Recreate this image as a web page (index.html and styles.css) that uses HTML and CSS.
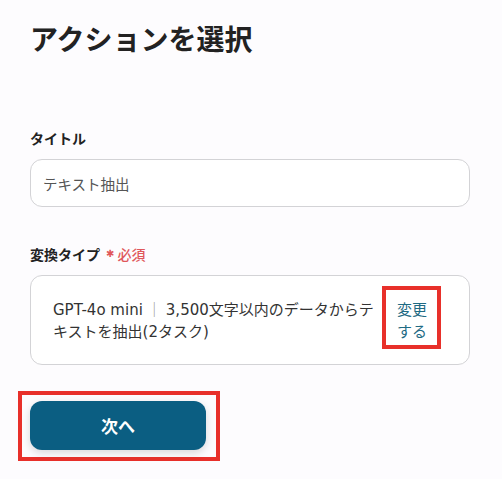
FILE: index.html
```html
<!DOCTYPE html>
<html lang="ja">
<head>
<meta charset="utf-8">
<link rel="stylesheet" href="styles.css">
</head>
<body>
<main class="page">
  <h1 class="title">アクションを選択</h1>
  <section class="field field-first">
    <label class="label">タイトル</label>
    <div class="input">テキスト抽出</div>
  </section>
  <section class="field">
    <label class="label">変換タイプ<span class="req"><span class="star">✱</span><span class="req-text">必須</span></span></label>
    <div class="select-box">
      <div class="select-text">GPT-4o mini<span class="bar">｜</span>3,500文字以内のデータからテキストを抽出(2タスク)</div>
      <a class="change">変更する</a>
    </div>
  </section>
  <div class="actions">
    <div class="next-wrap">
      <button class="next">次へ</button>
    </div>
  </div>
</main>
</body>
</html>
```
FILE: styles.css
```css
html, body {
  margin: 0;
  padding: 0;
  background: #fdfcfe;
}
body {
  font-family: "Noto Sans CJK JP", "Noto Sans", sans-serif;
  color: #222;
}
.page {
  padding: 18px 32px 0 30px;
}
.title {
  margin: 0;
  font-size: 28px;
  line-height: 40px;
  font-weight: 700;
  color: #222;
}
.field {
  display: flex;
  flex-direction: column;
  gap: 11px;
  margin-top: 37px;
}
.field-first {
  margin-top: 70px;
}
.label {
  font-size: 14px;
  line-height: 20px;
  font-weight: 700;
  color: #222;
  display: flex;
  align-items: center;
}
.req {
  color: #e0575b;
  font-weight: 500;
  display: inline-flex;
  align-items: center;
  margin-left: 6px;
}
.star {
  font-size: 10px;
  font-family: "DejaVu Sans", sans-serif;
}
.req-text {
  font-size: 14px;
  margin-left: 3px;
}
.input {
  height: 46px;
  border: 1px solid #d3d3d6;
  border-radius: 12px;
  background: #fff;
  display: flex;
  align-items: center;
  padding: 0 12px;
  font-size: 14.5px;
  color: #555;
}
.select-box {
  height: 88px;
  border: 1px solid #d3d3d6;
  border-radius: 12px;
  background: #fff;
  display: flex;
  align-items: center;
  gap: 16px;
  padding: 0 42px 0 22px;
}
.select-text {
  flex: 1;
  font-family: "DejaVu Sans", "Noto Sans CJK JP", sans-serif;
  font-size: 15px;
  line-height: 22px;
  color: #333;
}
.bar {
  font-family: "Noto Sans CJK JP", sans-serif;
  color: #999;
  padding: 0 4px;
}
.change {
  position: relative;
  width: 30px;
  font-size: 15px;
  line-height: 22px;
  color: #1f6b84;
}
.change::after {
  content: "";
  position: absolute;
  top: -12px;
  bottom: -7px;
  left: -15px;
  right: -14px;
  border: 4px solid #e8302a;
}
.actions {
  margin-top: 26px;
  display: flex;
}
.next-wrap {
  margin-left: -12px;
  border: 4px solid #e8302a;
  padding: 6px 10px 7px 8px;
}
.next {
  display: block;
  width: 176px;
  height: 49px;
  border: none;
  border-radius: 12px;
  background: #0b5e82;
  color: #fff;
  font-family: inherit;
  font-size: 17px;
  font-weight: 700;
  box-shadow: 0 3px 8px rgba(0, 0, 0, 0.15);
}
```
